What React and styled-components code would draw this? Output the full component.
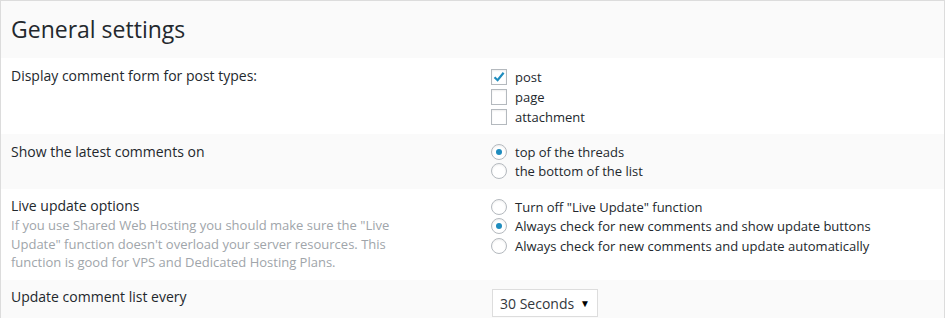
import React from 'react';
import styled, { createGlobalStyle } from 'styled-components';

const GlobalStyle = createGlobalStyle`
  html, body {
    margin: 0;
    padding: 0;
    background: #fff;
  }
  body {
    font-family: "Open Sans", "Liberation Sans", sans-serif;
    color: #23282d;
  }
`;

const Panel = styled.div`
  width: 943px;
  height: 317px;
  border: 1px solid #dcdcdc;
  border-bottom: none;
  background: #fff;
  overflow: hidden;
`;

const Header = styled.div`
  height: 57px;
  background: #fafafa;
  display: flex;
  align-items: center;
  padding-left: 10px;
`;

const Title = styled.h2`
  margin: 0;
  font-size: 23px;
  font-weight: 400;
  color: #23282d;
  line-height: 1;
  padding-bottom: 1px;
`;

const Row = styled.div`
  display: grid;
  grid-template-columns: 480px 1fr;
  padding: ${p => p.$pad || '8px 10px 8px 10px'};
  background: ${p => (p.$shaded ? '#fafafa' : '#fff')};
  min-height: ${p => p.$h || 0}px;
  box-sizing: border-box;
`;

const Label = styled.div`
  font-size: 14px;
  line-height: 20px;
  color: #23282d;
`;

const Desc = styled.div`
  font-size: 13px;
  line-height: 18.5px;
  color: #a0a5aa;
  width: 400px;
`;

const Options = styled.div`
  display: flex;
  flex-direction: column;
  padding-top: ${p => p.$top || 0}px;
`;

const Option = styled.label`
  display: flex;
  align-items: center;
  gap: 8px;
  height: ${p => p.$h || 20}px;
  font-size: 13px;
  color: #23282d;
`;

const Box = styled.span`
  width: 16px;
  height: 16px;
  box-sizing: border-box;
  border: 1px solid #b4b9be;
  background: #fff;
  box-shadow: inset 0 1px 2px rgba(0, 0, 0, 0.07);
  display: flex;
  align-items: center;
  justify-content: center;
  flex-shrink: 0;
`;

const Radio = styled(Box)`
  border-radius: 50%;
  &::after {
    content: '';
    display: ${p => (p.$on ? 'block' : 'none')};
    width: 6px;
    height: 6px;
    border-radius: 50%;
    background: #1e8cbe;
  }
`;

const Select = styled.div`
  width: 106px;
  height: 28px;
  box-sizing: border-box;
  border: 1px solid #dddddd;
  background: #fff;
  display: flex;
  align-items: center;
  justify-content: space-between;
  padding: 0 7px 0 7px;
  margin: 2px 0 0 1px;
  font-size: 14px;
  color: #32373c;
`;

const Arrow = styled.span`
  font-size: 10px;
  color: #000;
  line-height: 1;
`;

const Check = () => (
  <svg width="14" height="14" viewBox="0 0 14 14">
    <path d="M2.5 7.2 L5.6 10.2 L11.6 2.8" fill="none" stroke="#1e8cbe" strokeWidth="2.2" />
  </svg>
);

const Checkbox = ({ on, children }) => (
  <Option>
    <Box>{on && <Check />}</Box>
    {children}
  </Option>
);

const RadioOption = ({ on, children, h }) => (
  <Option $h={h}>
    <Radio $on={on} />
    {children}
  </Option>
);

export default function App() {
  return (
    <>
      <GlobalStyle />
      <Panel>
        <Header>
          <Title>General settings</Title>
        </Header>
        <Row $h={76} $pad="8px 10px 6px 10px">
          <Label>Display comment form for post types:</Label>
          <Options $top={1}>
            <Checkbox on>post</Checkbox>
            <Checkbox>page</Checkbox>
            <Checkbox>attachment</Checkbox>
          </Options>
        </Row>
        <Row $shaded $h={55} $pad="8px 10px 8px 10px">
          <Label>Show the latest comments on</Label>
          <Options>
            <RadioOption on h={19}>top of the threads</RadioOption>
            <RadioOption h={19}>the bottom of the list</RadioOption>
          </Options>
        </Row>
        <Row $h={91} $pad="7px 10px 8px 10px">
          <div>
            <Label>Live update options</Label>
            <Desc>
              If you use Shared Web Hosting you should make sure the "Live Update" function doesn't
              overload your server resources. This function is good for VPS and Dedicated Hosting Plans.
            </Desc>
          </div>
          <Options $top={1}>
            <RadioOption h={19.5}>Turn off "Live Update" function</RadioOption>
            <RadioOption on h={19.5}>Always check for new comments and show update buttons</RadioOption>
            <RadioOption h={19.5}>Always check for new comments and update automatically</RadioOption>
          </Options>
        </Row>
        <Row $shaded $h={40} $pad="7px 10px 1px 10px">
          <Label>Update comment list every</Label>
          <div>
            <Select>
              <span>30 Seconds</span>
              <Arrow>▼</Arrow>
            </Select>
          </div>
        </Row>
      </Panel>
    </>
  );
}
